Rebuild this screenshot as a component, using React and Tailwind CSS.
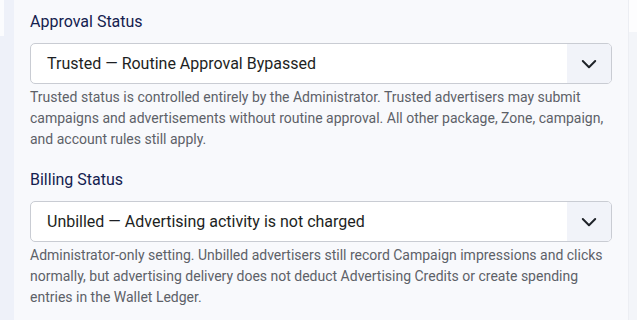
import React from "react";

function Chevron() {
  return (
    <svg width="16" height="16" viewBox="0 0 16 16" fill="none">
      <path d="M1.8 5 L8 11.2 L14.2 5" stroke="#1f2329" strokeWidth="2" strokeLinecap="round" strokeLinejoin="round" />
    </svg>
  );
}

function Field({ label, value, help }) {
  return (
    <div className="flex flex-col">
      <div className="text-[16px] leading-[24px] text-[#14214f]">{label}</div>
      <div className="mt-[9px] flex h-[41px] w-[582px] items-stretch overflow-hidden rounded-[5px] border border-[#c9ccd3] bg-white">
        <div className="flex flex-1 items-center pl-[16px] text-[16px] text-[#1d1f23]">{value}</div>
        <div className="flex w-[44px] items-center justify-center bg-[#f1f3f9]">
          <Chevron />
        </div>
      </div>
      <p className="mt-[3px] w-[590px] text-[14px] leading-[21px] text-[#5d6168]">{help}</p>
    </div>
  );
}

export default function App() {
  return (
    <div
      className="flex h-[320px] w-[637px] overflow-hidden bg-[#eef1f9]"
      style={{ fontFamily: "Roboto, 'Liberation Sans', sans-serif" }}
    >
      <div className="flex w-[14px] flex-col">
        <div className="h-[36px] w-[4px] bg-[#fbfcfe]"></div>
      </div>
      <div className="flex w-[614px] flex-col gap-[18px] bg-[#f8f9fc] pl-[16px] pt-[10px]">
        <Field
          label="Approval Status"
          value="Trusted — Routine Approval Bypassed"
          help="Trusted status is controlled entirely by the Administrator. Trusted advertisers may submit campaigns and advertisements without routine approval. All other package, Zone, campaign, and account rules still apply."
        />
        <Field
          label="Billing Status"
          value="Unbilled — Advertising activity is not charged"
          help="Administrator-only setting. Unbilled advertisers still record Campaign impressions and clicks normally, but advertising delivery does not deduct Advertising Credits or create spending entries in the Wallet Ledger."
        />
      </div>
      <div className="flex flex-1 flex-col border-l border-[#eceef3] bg-[#f3f5f9]">
        <div className="h-[32px] bg-[#fdfdfe]"></div>
      </div>
    </div>
  );
}
